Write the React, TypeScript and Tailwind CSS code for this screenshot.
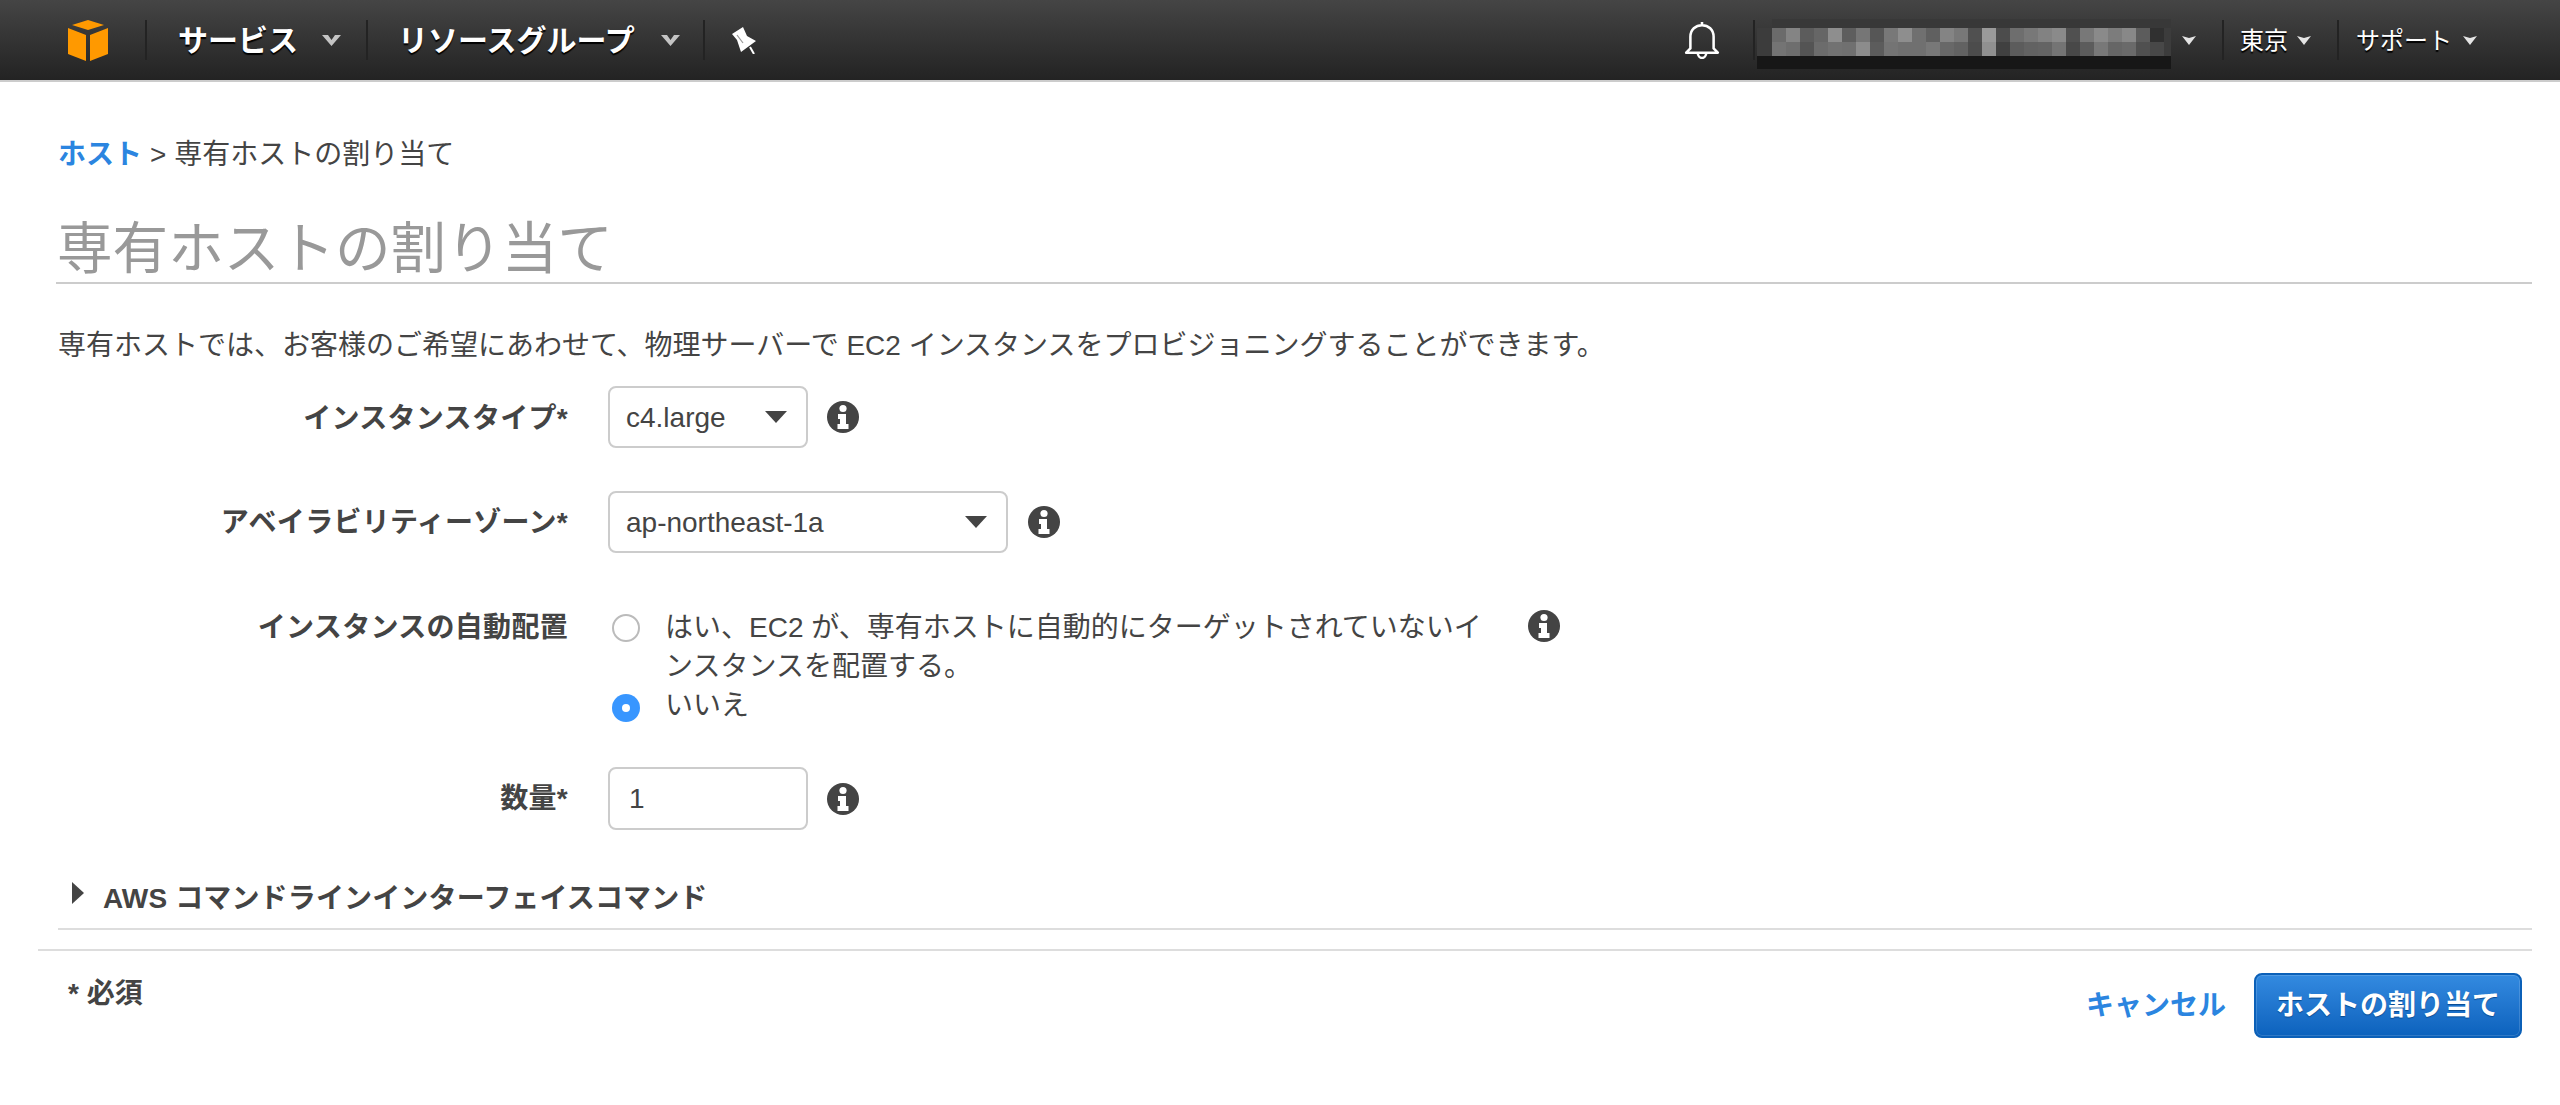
// one entry per mosaic column: upper row, lower row
const MOSAIC_COLUMNS = [
  ["bg-[#6b6b6b]", "bg-[#747474]"],
  ["bg-[#848484]", "bg-[#6e6e6e]"],
  ["bg-[#5c5c5c]", "bg-[#545454]"],
  ["bg-[#666666]", "bg-[#6c6c6c]"],
  ["bg-[#8e8e8e]", "bg-[#727272]"],
  ["bg-[#5e5e5e]", "bg-[#707070]"],
  ["bg-[#767676]", "bg-[#8c8c8c]"],
  ["bg-[#565656]", "bg-[#5c5c5c]"],
  ["bg-[#787878]", "bg-[#747474]"],
  ["bg-[#8e8e8e]", "bg-[#707070]"],
  ["bg-[#707070]", "bg-[#707070]"],
  ["bg-[#606060]", "bg-[#787878]"],
  ["bg-[#848484]", "bg-[#686868]"],
  ["bg-[#787878]", "bg-[#626262]"],
  ["bg-[#505050]", "bg-[#4c4c4c]"],
  ["bg-[#9a9a9a]", "bg-[#909090]"],
  ["bg-[#4c4c4c]", "bg-[#404040]"],
  ["bg-[#6e6e6e]", "bg-[#5c5c5c]"],
  ["bg-[#787878]", "bg-[#626262]"],
  ["bg-[#828282]", "bg-[#646464]"],
  ["bg-[#8a8a8a]", "bg-[#747474]"],
  ["bg-[#505050]", "bg-[#484848]"],
  ["bg-[#787878]", "bg-[#5c5c5c]"],
  ["bg-[#8a8a8a]", "bg-[#787878]"],
  ["bg-[#7c7c7c]", "bg-[#666666]"],
  ["bg-[#888888]", "bg-[#6a6a6a]"],
  ["bg-[#5c5c5c]", "bg-[#505050]"],
  ["bg-[#303030]", "bg-[#484848]"],
];

const Separator = () => <div className="w-[2px] h-10 bg-[#232323] shrink-0" />;

const NavChevron = () => (
  <svg width="19" height="11" viewBox="0 0 19 11" className="shrink-0">
    <path d="M0 0h6l3.5 5L13 0h6l-9.5 11z" fill="#c4c4c4" />
  </svg>
);

const SmallChevron = () => (
  <svg width="14" height="9" viewBox="0 0 14 9" className="shrink-0">
    <path d="M0 0l7 2 7-2-7 9z" fill="#e4e4e4" />
  </svg>
);

const Info = () => (
  <svg width="32" height="32" viewBox="0 0 32 32" className="shrink-0">
    <circle cx="16" cy="16" r="16" fill="#444" />
    <circle cx="16" cy="7.5" r="3.6" fill="#fff" />
    <path d="M11 13h8v10h2.5v5h-11v-5H13v-5h-2z" fill="#fff" />
  </svg>
);

const SelectBox = ({ value, width }: { value: string; width: string }) => (
  <div
    className={`${width} h-[62px] flex items-center justify-between pl-[16px] pr-[19px] border-2 border-[#ccc] rounded-lg bg-white text-[#444]`}
  >
    <span className="pt-[2px]">{value}</span>
    <svg width="22" height="12" viewBox="0 0 22 12">
      <path d="M0 0h22L11 12z" fill="#444" />
    </svg>
  </div>
);

const Label = ({
  children,
  className = "",
}: {
  children: React.ReactNode;
  className?: string;
}) => (
  <div
    className={`w-[568px] shrink-0 mr-[40px] text-right font-bold tracking-[0.3px] text-[#444] ${className}`}
  >
    {children}
  </div>
);

const App = () => {
  return (
    <div className="min-h-screen bg-white text-[28px] text-[#444] font-['Liberation_Sans','Noto_Sans_CJK_JP',sans-serif]">
      <header className="h-[82px] border-b-2 border-[#ccc] bg-linear-to-b from-[#454545] to-[#232323] flex items-center pl-[68px] pr-[83px] text-white">
        <svg width="40" height="41" viewBox="0 0 40 41" className="shrink-0">
          <path d="M20 0L4 5l16 5 16-5z" fill="#ff9900" />
          <path d="M0 8l18 7v26L0 34z" fill="#ff9900" />
          <path d="M40 8l-18 7v26l18-7z" fill="#ff9900" />
        </svg>
        <div className="ml-[37px]">
          <Separator />
        </div>
        <span className="ml-[31px] text-[30px] font-bold [text-shadow:0_2px_1px_#000]">
          サービス
        </span>
        <div className="ml-[24px]">
          <NavChevron />
        </div>
        <div className="ml-[25px]">
          <Separator />
        </div>
        <span className="ml-[30px] text-[30px] font-bold [text-shadow:0_2px_1px_#000]">
          リソースグループ
        </span>
        <div className="ml-[26px]">
          <NavChevron />
        </div>
        <div className="ml-[23px]">
          <Separator />
        </div>
        <svg width="24" height="27" viewBox="0 0 24 27" className="ml-[27px] shrink-0">
          <path d="M0 7L11 0l4 9 9 5-15 11-4-12z" fill="#fff" />
          <path d="M18 20l4 7" stroke="#fff" strokeWidth="2" fill="none" />
          <path d="M5 8l6 8" stroke="#999" strokeWidth="1.2" fill="none" />
        </svg>

        <div className="ml-auto flex items-center">
          <svg width="36" height="38" viewBox="0 0 34 36" fill="none" stroke="#fff" strokeWidth="2.4" className="mr-[33px]">
            <path d="M17 1v3M6 26V15C6 8 11 4 17 4s11 4 11 11v11l4 4H2z" strokeLinejoin="round" />
            <path d="M13 30c0 3 2 5 4 5s4-2 4-5" />
          </svg>
          <Separator />
          <div className="ml-[2px] mt-[8px] h-[50px] w-[414px] shrink-0 flex flex-col">
            <div className="h-[9px] ml-[15px] bg-[#383838]" />
            <div className="flex h-[28px] bg-[#3c3c3c] pl-[15px]">
              {MOSAIC_COLUMNS.map((col, i) => (
                <div key={i} className="w-[14px] flex flex-col shrink-0">
                  <div className={`h-[14px] ${col[0]}`} />
                  <div className={`h-[14px] ${col[1]}`} />
                </div>
              ))}
            </div>
            <div className="h-[13px] bg-[#171717]" />
          </div>
          <div className="ml-[11px]">
            <SmallChevron />
          </div>
          <div className="ml-[26px]">
            <Separator />
          </div>
          <span className="ml-[16px] pt-[2px] text-[24px] [text-shadow:0_2px_1px_#000]">東京</span>
          <div className="ml-[9px]">
            <SmallChevron />
          </div>
          <div className="ml-[26px]">
            <Separator />
          </div>
          <span className="ml-[17px] pt-[2px] text-[24px] [text-shadow:0_2px_1px_#000]">サポート</span>
          <div className="ml-[11px]">
            <SmallChevron />
          </div>
        </div>
      </header>

      <main className="pt-[53px]">
        <div className="h-10 pl-[58px] flex items-center">
          <a className="text-[#2b85e0] font-bold">ホスト</a>
          <span className="ml-[8px]">&gt; 専有ホストの割り当て</span>
        </div>

        <div className="ml-[56px] mr-[28px] h-[109px] border-b-2 border-[#ccc] pl-[1px] pt-[41px] text-[55.6px] leading-[66px] text-[#999]">
          専有ホストの割り当て
        </div>

        <p className="ml-[58px] mt-[42px] h-10 leading-10">
          専有ホストでは、お客様のご希望にあわせて、物理サーバーで EC2 インスタンスをプロビジョニングすることができます。
        </p>

        <div className="mt-[20px] flex items-center">
          <Label className="mt-[3px]">インスタンスタイプ*</Label>
          <SelectBox value="c4.large" width="w-[200px]" />
          <div className="ml-[19px]">
            <Info />
          </div>
        </div>

        <div className="mt-[43px] flex items-center">
          <Label className="mt-[1px]">アベイラビリティーゾーン*</Label>
          <SelectBox value="ap-northeast-1a" width="w-[400px]" />
          <div className="ml-[20px]">
            <Info />
          </div>
        </div>

        <div className="mt-[55px] flex items-start leading-[39px]">
          <Label>インスタンスの自動配置</Label>
          <div className="w-[884px] ml-[4px] shrink-0">
            <div className="flex items-start">
              <div className="mt-[6px] size-[28px] rounded-full border-2 border-[#bbb] bg-white shrink-0" />
              <div className="ml-[25px] w-[830px] shrink-0">
                はい、EC2 が、専有ホストに自動的にターゲットされていないインスタンスを配置する。
              </div>
            </div>
            <div className="flex items-start">
              <div className="mt-[8px] size-[28px] rounded-full bg-[#3896ff] flex items-center justify-center shrink-0">
                <div className="size-[8px] rounded-full bg-white" />
              </div>
              <div className="ml-[25px]">いいえ</div>
            </div>
          </div>
          <div className="ml-[32px] mt-[2px]">
            <Info />
          </div>
        </div>

        <div className="mt-[42px] flex items-center">
          <Label>数量*</Label>
          <input
            defaultValue="1"
            className="w-[200px] h-[63px] pl-[19px] border-2 border-[#ccc] rounded-lg bg-white text-[#444] outline-none"
          />
          <div className="ml-[19px]">
            <Info />
          </div>
        </div>

        <div className="mt-[50px] ml-[72px] flex items-center h-[32px]">
          <svg width="12" height="22" viewBox="0 0 12 22" className="shrink-0 -mt-[6px]">
            <path d="M0 0l12 11L0 22z" fill="#444" />
          </svg>
          <span className="ml-[19px] mt-[6px] font-bold tracking-[0.15px]">AWS コマンドラインインターフェイスコマンド</span>
        </div>

        <div className="mt-[16px] ml-[58px] mr-[28px] border-t-2 border-[#ddd]" />
        <div className="mt-[19px] ml-[38px] mr-[28px] border-t-2 border-[#ddd]" />

        <div className="ml-[68px] mr-[38px] flex items-start justify-between">
          <div className="mt-[22px] font-bold">* 必須</div>
          <div className="mt-[22px] flex items-center">
            <a className="text-[#2b85e0] font-bold">キャンセル</a>
            <button className="ml-[28px] h-[65px] w-[268px] rounded-lg border-2 border-[#0b60b8] bg-linear-to-b from-[#338ae0] to-[#0b62bd] text-white font-bold [text-shadow:0_1px_1px_#084a90] [box-shadow:inset_0_0_0_1px_rgba(255,255,255,0.15)]">
              ホストの割り当て
            </button>
          </div>
        </div>
      </main>
    </div>
  );
};

export default App;
